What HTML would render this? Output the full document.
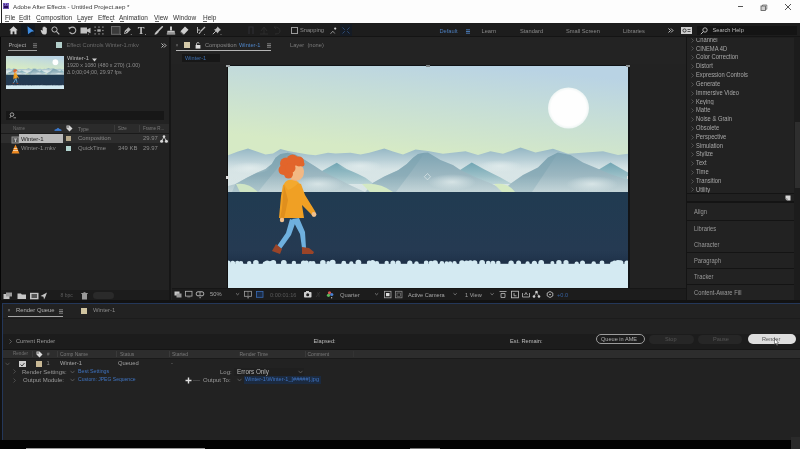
<!DOCTYPE html>
<html><head><meta charset="utf-8">
<style>
*{margin:0;padding:0;box-sizing:border-box}
html,body{width:800px;height:449px;overflow:hidden;background:#121212}
body{will-change:transform;position:relative;font-family:"Liberation Sans",sans-serif;color:#9a9a9a;font-size:5.7px;line-height:1}
.a{position:absolute}
.t{position:absolute;white-space:nowrap;line-height:1}
.ic{position:absolute;overflow:visible}
</style></head><body>
<!-- ===== TITLE BAR ===== -->
<div class="a" style="left:0;top:0;width:800px;height:23px;background:#fdfdfd"></div>
<div class="a" style="left:1px;top:0;width:1px;height:23px;background:#222"></div>
<div class="a" style="left:3px;top:3px;width:6.4px;height:6.2px;background:#2a0f58;border:0.4px solid #6d55b0"></div>
<div class="t" style="left:4.2px;top:4.4px;font-size:3.4px;color:#9f84f0;font-weight:bold">Ae</div>
<div class="t" style="left:13px;top:3.6px;font-size:6.2px;color:#3a3a3a">Adobe After Effects - Untitled Project.aep *</div>
<div class="a" style="left:737.5px;top:6px;width:5px;height:0.8px;background:#555"></div>
<svg class="ic" style="left:760px;top:3.5px" width="8" height="7" viewBox="0 0 8 7"><rect x="1" y="2" width="4.5" height="4.5" fill="#cfcfcf" stroke="#555" stroke-width="0.8"/><path d="M2.5 2V1H6.8V5.2H5.5" fill="none" stroke="#555" stroke-width="0.7"/></svg>
<svg class="a" style="left:784px;top:3px" width="8" height="8" viewBox="0 0 8 8"><path d="M1 1L7 7M7 1L1 7" stroke="#555" stroke-width="1"/></svg>
<!-- menu -->
<div class="t" style="left:5px;top:15px;font-size:6.5px;color:#333;word-spacing:0">File</div>
<div class="t" style="left:19px;top:15px;font-size:6.5px;color:#333">Edit</div>
<div class="t" style="left:36px;top:15px;font-size:6.5px;color:#333">Composition</div>
<div class="t" style="left:77px;top:15px;font-size:6.5px;color:#333">Layer</div>
<div class="t" style="left:98px;top:15px;font-size:6.5px;color:#333">Effect</div>
<div class="t" style="left:119px;top:15px;font-size:6.5px;color:#333">Animation</div>
<div class="t" style="left:154px;top:15px;font-size:6.5px;color:#333">View</div>
<div class="t" style="left:173px;top:15px;font-size:6.5px;color:#333">Window</div>
<div class="t" style="left:203px;top:15px;font-size:6.5px;color:#333">Help</div>
<div class="a" style="left:5px;top:20.6px;width:3.5px;height:0.7px;background:#666"></div>
<div class="a" style="left:19px;top:20.6px;width:3.5px;height:0.7px;background:#666"></div>
<div class="a" style="left:36.5px;top:20.6px;width:4px;height:0.7px;background:#666"></div>
<div class="a" style="left:77.5px;top:20.6px;width:3.5px;height:0.7px;background:#666"></div>
<div class="a" style="left:111px;top:20.6px;width:2px;height:0.7px;background:#666"></div>
<div class="a" style="left:120px;top:20.6px;width:4px;height:0.7px;background:#666"></div>
<div class="a" style="left:155px;top:20.6px;width:3.5px;height:0.7px;background:#666"></div>
<div class="a" style="left:203px;top:20.6px;width:4px;height:0.7px;background:#666"></div>
<!-- ===== TOOLBAR ===== -->
<div class="a" style="left:0;top:23px;width:800px;height:14px;background:#1d1d1d"></div>
<div class="a" style="left:0;top:36px;width:800px;height:1px;background:#141414"></div>
<!-- home -->
<svg class="ic" style="left:8.7px;top:25.8px" width="9" height="8.5" viewBox="0 0 9 8.5"><path d="M4.5 0.3L0.2 4.2H1.5V8.2H3.6V5.6H5.4V8.2H7.5V4.2H8.8Z" fill="#d2d2d2"/></svg>
<!-- selection (blue) -->
<div class="a" style="left:21px;top:23.5px;width:14px;height:12.5px;background:#131920"></div>
<svg class="ic" style="left:26.5px;top:25.8px" width="8" height="9" viewBox="0 0 8 9"><path d="M0.5 0.3L7.2 5.2L4.5 5.8L1 8.3Z" fill="#3d8be0"/></svg>
<!-- hand -->
<svg class="ic" style="left:39.5px;top:25.5px" width="9" height="9" viewBox="0 0 9 9"><path d="M0.6 4.3Q1.2 3.6 2 4.2L2.6 5V1.6Q3 1 3.5 1.6V4.3V0.8Q4 0.2 4.6 0.8V4.2V1.1Q5.1 0.5 5.7 1.1V4.3V2Q6.2 1.4 6.8 2V6Q6.8 8.6 4.3 8.6Q2.5 8.6 1.7 7Z" fill="#cdcdcd"/></svg>
<!-- zoom -->
<svg class="ic" style="left:51px;top:26px" width="9" height="9" viewBox="0 0 9 9"><circle cx="3.5" cy="3.5" r="2.6" fill="none" stroke="#bdbdbd" stroke-width="1"/><path d="M5.4 5.4L8.3 8.3" stroke="#bdbdbd" stroke-width="1.1"/></svg>
<!-- rotate -->
<svg class="ic" style="left:68px;top:26px" width="9" height="9" viewBox="0 0 9 9"><path d="M2 2.2A3.3 3.3 0 1 1 1.6 6" fill="none" stroke="#b5b5b5" stroke-width="1.1"/><path d="M0.3 1.2L3.2 1.2L1.2 3.8Z" fill="#b5b5b5"/></svg>
<!-- camera -->
<svg class="ic" style="left:80px;top:26px" width="11" height="9" viewBox="0 0 11 9"><rect x="0.5" y="1.5" width="6.5" height="6" fill="#c2c2c2"/><path d="M7 3.5L10.5 1.8V7.2L7 5.5Z" fill="#c2c2c2"/><rect x="8" y="7.6" width="1" height="1" fill="#888"/></svg>
<!-- pan behind -->
<svg class="ic" style="left:94px;top:26px" width="10" height="9" viewBox="0 0 10 9"><g fill="#aaa"><rect x="0.5" y="0.5" width="1.2" height="1.2"/><rect x="4.4" y="0.5" width="1.2" height="1.2"/><rect x="8.3" y="0.5" width="1.2" height="1.2"/><rect x="0.5" y="3.9" width="1.2" height="1.2"/><rect x="8.3" y="3.9" width="1.2" height="1.2"/><rect x="0.5" y="7.3" width="1.2" height="1.2"/><rect x="4.4" y="7.3" width="1.2" height="1.2"/><rect x="8.3" y="7.3" width="1.2" height="1.2"/><rect x="3.3" y="3.3" width="3.4" height="2.4"/></g></svg>
<!-- rectangle -->
<svg class="ic" style="left:111px;top:26px" width="10" height="9" viewBox="0 0 10 9"><rect x="0.5" y="0.5" width="8.5" height="7.8" fill="#3a3a3a" stroke="#6a6a6a" stroke-width="1"/><rect x="9" y="8" width="1" height="1" fill="#777"/></svg>
<!-- pen -->
<svg class="ic" style="left:123px;top:26px" width="9" height="9" viewBox="0 0 9 9"><path d="M1 8L1.8 4.8L5.5 1.2L7.8 3.5L4.2 7.2Z" fill="#b8b8b8"/><path d="M2 7L4 5" stroke="#1d1d1d" stroke-width="0.7"/><rect x="7.8" y="8" width="1" height="1" fill="#888"/></svg>
<!-- T -->
<div class="t" style="left:137.8px;top:25.6px;font-family:'Liberation Serif',serif;font-weight:bold;font-size:10px;color:#c4c4c4">T</div>
<div class="a" style="left:145px;top:34px;width:1px;height:1px;background:#888"></div>
<!-- brush -->
<svg class="ic" style="left:154px;top:25.5px" width="9" height="9" viewBox="0 0 9 9"><path d="M8.3 0.8L4.5 4.6" stroke="#c4c4c4" stroke-width="1.6" stroke-linecap="round"/><path d="M3.6 4.3L5 5.7L2.6 8.2Q1 8.9 0.5 8.5Q0.5 7.2 3.6 4.3Z" fill="#c4c4c4"/></svg>
<!-- stamp -->
<svg class="ic" style="left:166px;top:26px" width="10" height="9" viewBox="0 0 10 9"><rect x="4" y="0.5" width="2" height="4" fill="#c6c6c6"/><path d="M1.5 4.8H8.5L9 6.8H1Z" fill="#c6c6c6"/><rect x="0.8" y="7.3" width="8.4" height="1.2" fill="#c6c6c6"/></svg>
<!-- eraser -->
<svg class="ic" style="left:180px;top:26px" width="9" height="9" viewBox="0 0 9 9"><path d="M5 0.5L8.5 3.8L4 8.5L0.5 5.2Z" fill="#cfcfcf"/><path d="M0.5 5.2L4 8.5L3 8.8L0.6 6.4Z" fill="#777"/></svg>
<!-- roto brush -->
<svg class="ic" style="left:196px;top:26px" width="10" height="9" viewBox="0 0 10 9"><path d="M1.5 1V7M1.5 4H4" stroke="#b0b0b0" stroke-width="1"/><path d="M9 1L4.5 5.5" stroke="#b8b8b8" stroke-width="1.2"/><path d="M4.3 5.3L5 6L3.5 8Q2.5 8.3 2.5 7.6Z" fill="#b8b8b8"/><rect x="8" y="8" width="1" height="1" fill="#777"/></svg>
<!-- puppet pin -->
<svg class="ic" style="left:212px;top:26px" width="10" height="9" viewBox="0 0 10 9"><path d="M5.5 0.5L9 4L7.8 4.6L6.2 6.2L6 7.5L2 3.5L3.4 3.2L5 1.7Z" fill="#bcbcbc"/><path d="M3.8 5.2L0.8 8.2" stroke="#bcbcbc" stroke-width="1"/><rect x="8.5" y="8" width="1" height="1" fill="#777"/></svg>
<!-- faded icons -->
<svg class="ic" style="left:247px;top:26px" width="36" height="9" viewBox="0 0 36 9"><path d="M2 8V1H6V8" fill="none" stroke="#2e2e33" stroke-width="1.2"/><path d="M13 8H21M17 1V8M14 5L17 1L20 5" fill="none" stroke="#2d2d2d" stroke-width="1"/><path d="M27 1Q33 1 33 5Q33 8 28 8M27 1L29 3" fill="none" stroke="#2d2d2d" stroke-width="1"/></svg>
<!-- snapping -->
<div class="a" style="left:291px;top:27px;width:6.5px;height:6.5px;border:1px solid #9a9a9a"></div>
<div class="t" style="left:300px;top:28.2px;color:#8e8e8e">Snapping</div>
<svg class="ic" style="left:329px;top:26px" width="9" height="9" viewBox="0 0 9 9"><path d="M1.5 7.8L3.8 5.2L5.8 7.5" fill="none" stroke="#999" stroke-width="0.9"/><circle cx="6.2" cy="2.6" r="1.1" fill="#d5d5d5"/></svg>
<div class="a" style="left:340px;top:24px;width:12px;height:12px;background:#151b24"></div><svg class="ic" style="left:341px;top:26px" width="10" height="9" viewBox="0 0 10 9"><path d="M1.5 1.5L3.8 3.8M8.5 1.5L6.2 3.8M1.5 7.5L3.8 5.2M8.5 7.5L6.2 5.2" fill="none" stroke="#2d4a75" stroke-width="1"/></svg>
<!-- workspaces -->
<div class="t" style="left:439.5px;top:28.6px;color:#4d7fbe">Default</div>
<svg class="ic" style="left:466px;top:28.5px" width="4" height="5" viewBox="0 0 4 5"><path d="M0 0.8H4M0 2.5H4M0 4.2H4" stroke="#4d7fbe" stroke-width="0.9"/></svg>
<div class="t" style="left:481.5px;top:28.6px;color:#8a8a8a">Learn</div>
<div class="t" style="left:520px;top:28.6px;color:#8a8a8a">Standard</div>
<div class="t" style="left:566px;top:28.6px;color:#8a8a8a">Small Screen</div>
<div class="t" style="left:623px;top:28.6px;color:#8a8a8a">Libraries</div>
<svg class="ic" style="left:668px;top:27.5px" width="6" height="5" viewBox="0 0 6 5"><path d="M0.5 0.5L2.5 2.5L0.5 4.5M3 0.5L5 2.5L3 4.5" fill="none" stroke="#cfcfcf" stroke-width="0.9"/></svg>
<div class="a" style="left:681px;top:26.5px;width:10.5px;height:7px;background:#cfcfcf"></div>
<svg class="ic" style="left:681px;top:26.5px" width="11" height="7" viewBox="0 0 11 7"><circle cx="3.5" cy="3.5" r="1.6" fill="none" stroke="#1d1d1d" stroke-width="0.8"/><path d="M6.5 2.5H9.5M6.5 4.5H9.5" stroke="#1d1d1d" stroke-width="0.7"/></svg>
<div class="a" style="left:697px;top:25.5px;width:100px;height:9px;background:#141414"></div>
<svg class="ic" style="left:700px;top:26.5px" width="8" height="8" viewBox="0 0 8 8"><circle cx="5" cy="3" r="2.2" fill="none" stroke="#bdbdbd" stroke-width="0.9"/><path d="M3.4 4.6L0.8 7.2" stroke="#bdbdbd" stroke-width="1"/></svg>
<div class="t" style="left:712.5px;top:28.3px;color:#b8b8b8">Search Help</div>
<!-- ===== PANEL AREA BG ===== -->
<div class="a" style="left:0;top:37px;width:800px;height:266px;background:#161616"></div>
<!-- ===== PROJECT PANEL ===== -->
<div class="a" style="left:1px;top:37px;width:168px;height:263px;background:#222"></div>
<div class="a" style="left:0;top:37px;width:1px;height:266px;background:#050505"></div>
<div class="t" style="left:8.5px;top:42.5px;color:#a8a8a8">Project</div>
<svg class="ic" style="left:33px;top:43px" width="4" height="5" viewBox="0 0 4 5"><path d="M0 0.8H4M0 2.5H4M0 4.2H4" stroke="#7a7a7a" stroke-width="0.9"/></svg>
<div class="a" style="left:8px;top:50px;width:29px;height:1px;background:#9d9d9d"></div>
<div class="a" style="left:56px;top:42px;width:5.5px;height:6px;background:#b3cfcb"></div>
<div class="t" style="left:66.5px;top:42.5px;color:#6b6b6b">Effect Controls Winter-1.mkv</div>
<svg class="ic" style="left:161px;top:43px" width="6" height="5" viewBox="0 0 6 5"><path d="M0.5 0.5L2.5 2.5L0.5 4.5M3 0.5L5 2.5L3 4.5" fill="none" stroke="#cfcfcf" stroke-width="0.9"/></svg>
<!-- thumbnail -->
<svg class="a" style="left:6px;top:56px" width="58" height="33" viewBox="228 66 400 222" preserveAspectRatio="none"><use href="#scene"/></svg>
<div class="t" style="left:67px;top:56px;color:#bdbdbd;font-size:5.8px">Winter-1</div>
<svg class="ic" style="left:92px;top:57.5px" width="5" height="4" viewBox="0 0 5 4"><path d="M0 0.5H5L2.5 3.5Z" fill="#d0d0d0"/></svg>
<div class="t" style="left:67px;top:63px;color:#8e8e8e;font-size:5.32px">1920 x 1080  (480 x 270) (1.00)</div>
<div class="t" style="left:67px;top:70.1px;color:#8e8e8e;font-size:5.32px">&#916; 0;00;04;00, 29.97 fps</div>
<!-- search field -->
<div class="a" style="left:6px;top:111px;width:158px;height:8.5px;background:#171717"></div>
<svg class="ic" style="left:9px;top:112px" width="9" height="7" viewBox="0 0 9 7"><circle cx="3" cy="2.6" r="1.8" fill="none" stroke="#bbb" stroke-width="0.8"/><path d="M1.8 4.2L0.8 6M4.5 5.8H7" stroke="#bbb" stroke-width="0.8"/></svg>
<!-- header -->
<div class="a" style="left:1px;top:124px;width:168px;height:9px;background:#2b2b2b"></div>
<div class="a" style="left:1px;top:133px;width:168px;height:0.6px;background:#1a1a1a"></div>
<div class="t" style="left:13px;top:127.3px;color:#6e6e6e;font-size:4.5px">Name</div>
<svg class="ic" style="left:54px;top:126.5px" width="8" height="4" viewBox="0 0 8 4"><path d="M0.5 3.5L4 0.8L7.5 3.5Z" fill="#3d7bd0"/><rect x="0.5" y="2.5" width="7" height="1.3" rx="0.6" fill="#3d7bd0"/></svg>
<svg class="ic" style="left:65.5px;top:124.5px" width="7" height="7" viewBox="0 0 7 7"><path d="M0.5 0.5H3.5L6.5 3.5L3.5 6.5L0.5 3.5Z" fill="#d6d6d6"/><circle cx="2" cy="2" r="0.7" fill="#2b2b2b"/></svg>
<div class="t" style="left:78px;top:127.3px;color:#7e7e7e;font-size:5px">Type</div>
<div class="a" style="left:114px;top:125px;width:0.7px;height:7px;background:#3a3a3a"></div>
<div class="t" style="left:118px;top:127.3px;color:#7a7a7a;font-size:4.5px">Size</div>
<div class="a" style="left:138.5px;top:125px;width:0.7px;height:7px;background:#3a3a3a"></div>
<div class="t" style="left:143px;top:127.3px;color:#7a7a7a;font-size:4.5px">Frame R...</div>
<!-- row 1 selected -->
<div class="a" style="left:1px;top:133.5px;width:168px;height:9.5px;background:#2e2e2e"></div>
<svg class="ic" style="left:10.5px;top:135.5px" width="9" height="8" viewBox="0 0 9 8"><rect x="0.5" y="0.5" width="8" height="7" fill="#8f8f8f"/><rect x="1.5" y="1.5" width="6" height="5" fill="#595959"/><path d="M3 2.5H6V3.5H5V6H4V3.5H3Z" fill="#bdbdbd"/></svg>
<div class="a" style="left:19px;top:133.5px;width:43.5px;height:9.5px;background:#b9b9b9"></div>
<div class="t" style="left:21px;top:135.5px;color:#222;font-size:6px">Winter-1</div>
<div class="a" style="left:66px;top:136px;width:5px;height:5px;background:#b6a98c"></div>
<div class="t" style="left:78px;top:135.5px;color:#8a8a8a;font-size:5.9px">Composition</div>
<div class="t" style="left:143px;top:135.5px;color:#8a8a8a;font-size:5.9px">29.97</div>
<svg class="ic" style="left:160px;top:134.5px" width="8" height="8" viewBox="0 0 8 8"><circle cx="4" cy="1.6" r="1.3" fill="#d8d8d8"/><circle cx="1.6" cy="6.2" r="1.5" fill="#d8d8d8"/><circle cx="6.4" cy="6.2" r="1.5" fill="#d8d8d8"/><path d="M4 2L1.6 6M4 2L6.4 6" stroke="#d8d8d8" stroke-width="0.8"/></svg>
<!-- row 2 -->
<svg class="ic" style="left:10.5px;top:144px" width="9" height="10" viewBox="0 0 9 10"><path d="M4.5 0.5L8.5 9.5H0.5Z" fill="#ef8a22"/><path d="M2.7 4.5H6.3M2 6.5H7" stroke="#f4d6b0" stroke-width="0.9"/></svg>
<div class="t" style="left:21px;top:146px;color:#8a8a8a;font-size:5.9px">Winter-1.mkv</div>
<div class="a" style="left:66px;top:146px;width:5px;height:5px;background:#b3d4cf"></div>
<div class="t" style="left:78px;top:146px;color:#8a8a8a;font-size:5.9px">QuickTime</div>
<div class="t" style="left:118px;top:146px;color:#8a8a8a;font-size:5.9px">349 KB</div>
<div class="t" style="left:143px;top:146px;color:#8a8a8a;font-size:5.9px">29.97</div>
<!-- project footer -->
<div class="a" style="left:1px;top:290px;width:168px;height:10px;background:#1c1c1c"></div>
<svg class="ic" style="left:3px;top:292px" width="80" height="8" viewBox="0 0 80 8"><g fill="#c4c4c4"><rect x="0.5" y="2" width="6" height="5"/><rect x="3" y="0.5" width="6" height="4" fill="#9a9a9a"/><path d="M14.5 1.5H18L18.8 2.5H23V7H14.5Z"/><rect x="27" y="0.8" width="8.5" height="6.5"/><path d="M44 0.5L37.5 4L40.5 4.8L41 7.5L42.2 5.2Z"/></g><rect x="28.5" y="2" width="5.5" height="4" fill="#555"/></svg>
<div class="t" style="left:60.5px;top:293px;color:#5d5d5d;font-size:5px">8 bpc</div>
<svg class="ic" style="left:81px;top:291.5px" width="7" height="8" viewBox="0 0 7 8"><rect x="1" y="2" width="5" height="5.5" fill="#9a9a9a"/><rect x="0.3" y="1" width="6.4" height="1" fill="#9a9a9a"/><rect x="2.5" y="0.2" width="2" height="1" fill="#9a9a9a"/></svg>
<div class="a" style="left:93px;top:291.5px;width:21px;height:7px;border-radius:3.5px;background:#2a2a2a"></div>
<!-- ===== COMPOSITION PANEL ===== -->
<div class="a" style="left:171px;top:37px;width:515px;height:263px;background:#232323"></div>
<div class="t" style="left:175.5px;top:42.5px;color:#777;font-size:5px">&#215;</div>
<div class="a" style="left:184px;top:42px;width:5.5px;height:5.5px;background:#d4c9a8"></div>
<svg class="ic" style="left:194.5px;top:41.5px" width="6" height="7" viewBox="0 0 6 7"><path d="M1.5 3V1.8Q1.5 0.6 3 0.6Q4.2 0.6 4.2 1.6" fill="none" stroke="#ddd" stroke-width="0.8"/><rect x="0.6" y="3" width="4.8" height="3.6" fill="#ddd"/></svg>
<div class="t" style="left:205px;top:42.5px;color:#8a8a8a">Composition</div>
<div class="t" style="left:239px;top:42.5px;color:#4f86c9">Winter-1</div>
<svg class="ic" style="left:266.5px;top:43px" width="4" height="5" viewBox="0 0 4 5"><path d="M0 0.8H4M0 2.5H4M0 4.2H4" stroke="#8a8a8a" stroke-width="0.9"/></svg>
<div class="a" style="left:176px;top:50px;width:95px;height:1px;background:#b5b5b5"></div>
<div class="t" style="left:290px;top:42.5px;color:#7a7a7a">Layer&#160;&#160;(none)</div>
<div class="a" style="left:182px;top:54px;width:37.5px;height:7.5px;background:#171717"></div>
<div class="t" style="left:185px;top:55.5px;color:#3f70b0;font-size:5.6px">Winter-1</div>
<!-- viewer -->
<div class="a" style="left:171px;top:64px;width:515px;height:225px;background:#222"></div><div class="a" style="left:227px;top:65px;width:402px;height:1px;background:#101316"></div><div class="a" style="left:227px;top:65px;width:1px;height:224px;background:#111"></div>
<svg class="a" style="left:228px;top:66px" width="400" height="222" viewBox="228 66 400 222">
<defs>
<linearGradient id="sky" gradientUnits="userSpaceOnUse" x1="440" y1="60" x2="430" y2="155"><stop offset="0" stop-color="#b9d3e4"/><stop offset="0.4" stop-color="#c5ddd8"/><stop offset="1" stop-color="#d6eac5"/></linearGradient>
<radialGradient id="sun"><stop offset="0.86" stop-color="#fefefe"/><stop offset="1" stop-color="#eef5f4"/></radialGradient>
<linearGradient id="mA" gradientUnits="userSpaceOnUse" x1="0" y1="148" x2="0" y2="170"><stop offset="0" stop-color="#95b7c4"/><stop offset="1" stop-color="#d5e3e5"/></linearGradient><linearGradient id="fogA" x1="0" y1="0" x2="0" y2="1"><stop offset="0" stop-color="#dbe7e7" stop-opacity="0"/><stop offset="0.5" stop-color="#dbe7e7" stop-opacity="0.5"/><stop offset="1" stop-color="#dbe7e7" stop-opacity="0.3"/></linearGradient><linearGradient id="fog" x1="0" y1="0" x2="0" y2="1"><stop offset="0" stop-color="#dfeaea" stop-opacity="0"/><stop offset="1" stop-color="#dfeaea" stop-opacity="0.3"/></linearGradient>
<linearGradient id="mB" gradientUnits="userSpaceOnUse" x1="0" y1="162" x2="0" y2="184"><stop offset="0" stop-color="#6fa4b2"/><stop offset="1" stop-color="#b4cfd3"/></linearGradient>
<linearGradient id="mC" gradientUnits="userSpaceOnUse" x1="0" y1="152" x2="0" y2="192"><stop offset="0" stop-color="#7ca3b2"/><stop offset="0.55" stop-color="#9ab6c0"/><stop offset="1" stop-color="#b6cbd0"/></linearGradient>
<linearGradient id="gnd" x1="0" y1="0" x2="0" y2="1"><stop offset="0" stop-color="#203b51"/><stop offset="0.6" stop-color="#253a52"/><stop offset="1" stop-color="#26364e"/></linearGradient>
<linearGradient id="gnd2" x1="0" y1="0" x2="0" y2="1"><stop offset="0" stop-color="#21374f" stop-opacity="0"/><stop offset="1" stop-color="#1b2d43"/></linearGradient>
<radialGradient id="wf"><stop offset="0" stop-color="#e4eeee" stop-opacity="0.75"/><stop offset="1" stop-color="#e4eeee" stop-opacity="0"/></radialGradient>
</defs>
<g id="scene" style="filter:blur(0.35px)"><rect x="228" y="66" width="400" height="222" fill="url(#sky)"/>
<circle cx="568.5" cy="108" r="20.5" fill="url(#sun)"/>
<path d="M228 155.25 L238 151.5 L248 148.4 L256.75 151.5 L265.5 154.6 L273 153.4 L280.5 149 L288 150.9 L298 152.75 L308 154.6 L315.5 155.25 L328 152.75 L335.5 153.4 L350.5 152.75 L360.5 154.6 L369.25 152.75 L384.25 148.4 L393 151.5 L403 154.6 L415.5 149.6 L428 150.9 L443 153.75 L465.5 151.25 L478 155 L490.5 151.25 L503 153.75 L520.5 147.5 L535.5 152.5 L553 148.75 L568 153.75 L603 151.25 L618 155 L628 153.75 L628 192 L228 192Z" fill="url(#mA)"/>
<rect x="228" y="160" width="400" height="32" fill="url(#fogA)"/>
<path d="M312 184 L322 171 L336.75 162.75 L346.75 169 L358 174 L365.5 177.75 L374 184Z" fill="url(#mB)"/>
<path d="M450 184 L460 170 L471.75 162.5 L485.5 170 L500.5 177.5 L512 184Z" fill="url(#mB)"/>
<path d="M590 184 L598 170 L610.5 162.5 L628 172.5 L628 184Z" fill="url(#mB)"/>
<path d="M228 186 L235.5 184 L246.75 177.75 L256.75 172.75 L265.5 169 L271.75 164 L275.5 157.75 L280.5 154 L288 152.75 L295.5 154.6 L305.5 160.25 L315.5 166.5 L323 171.5 L328 174 L340 180 L352 186 L365 192 L228 192Z" fill="url(#mC)"/>
<path d="M365 192 L373 182.75 L384.25 176.5 L398 170.25 L406.75 164 L413 157.75 L418 154 L424.25 152.75 L428 152.5 L440.5 160 L453 165 L460.5 170 L475 177 L490 183 L505 190 L510 192Z" fill="url(#mC)"/>
<path d="M500 192 L510.5 183.75 L523 175 L538 167.5 L548 157.5 L558 152.5 L570.5 155 L583 162.5 L598 168.75 L610 174 L628 180 L628 192Z" fill="url(#mC)"/>
<path d="M235.5 184 L246.75 177.75 L256.75 172.75 L265.5 169 L271.75 164 L275.5 157.75 L280.5 154 L288 152.75 L283 160 L276 170 L266 182 L258 192 L232 192Z" fill="#7aa2b0" opacity="0.45"/>
<path d="M373 182.75 L384.25 176.5 L398 170.25 L406.75 164 L413 157.75 L418 154 L424.25 152.75 L419 161 L411 172 L402 184 L396 192 L366 192Z" fill="#7aa2b0" opacity="0.45"/>
<path d="M510.5 183.75 L523 175 L538 167.5 L548 157.5 L558 152.5 L552 162 L544 174 L536 186 L532 192 L503 192Z" fill="#7aa2b0" opacity="0.45"/>
<rect x="228" y="176" width="400" height="16" fill="url(#fog)"/>
<ellipse cx="318" cy="184" rx="26" ry="8" fill="url(#wf)"/>
<ellipse cx="452" cy="182" rx="24" ry="8" fill="url(#wf)"/>
<ellipse cx="592" cy="184" rx="26" ry="8" fill="url(#wf)"/>
<ellipse cx="360" cy="166" rx="22" ry="6" fill="url(#wf)"/>
<ellipse cx="500" cy="166" rx="22" ry="6" fill="url(#wf)"/>
<ellipse cx="250" cy="168" rx="20" ry="6" fill="url(#wf)"/>

<path d="M236 184Q248 182 258 192H240Z" fill="#cfe5c4"/>
<path d="M362 184Q380 182 393 192H370Z" fill="#d4e9c3"/>
<path d="M494 184Q508 182 515 192H502Z" fill="#d5eac3"/>
<rect x="228" y="192" width="400" height="96" fill="url(#gnd)"/>
<rect x="228" y="250" width="400" height="15" fill="url(#gnd2)"/>
<rect x="228" y="263.8" width="400" height="24.2" fill="#d4eaf2"/><g fill="#d4eaf2"><circle cx="228.0" cy="263.2" r="2.7"/><circle cx="232.7" cy="263.3" r="2.5"/><circle cx="237.3" cy="262.9" r="2.2"/><circle cx="240.9" cy="263.4" r="2.4"/><circle cx="249.2" cy="263.1" r="2.2"/><circle cx="255.9" cy="262.8" r="2.8"/><circle cx="264.8" cy="263.5" r="2.1"/><circle cx="267.2" cy="263.2" r="2.8"/><circle cx="270.3" cy="263.1" r="2.2"/><circle cx="273.3" cy="263.0" r="2.9"/><circle cx="283.8" cy="262.8" r="2.9"/><circle cx="293.9" cy="263.0" r="2.2"/><circle cx="303.5" cy="263.2" r="2.6"/><circle cx="306.3" cy="263.0" r="2.4"/><circle cx="310.4" cy="263.2" r="2.2"/><circle cx="313.2" cy="263.4" r="2.3"/><circle cx="322.9" cy="262.9" r="2.8"/><circle cx="328.3" cy="263.0" r="2.0"/><circle cx="332.6" cy="262.7" r="3.0"/><circle cx="343.8" cy="263.2" r="2.4"/><circle cx="351.3" cy="263.4" r="2.1"/><circle cx="358.4" cy="262.6" r="2.9"/><circle cx="369.2" cy="262.9" r="2.4"/><circle cx="372.6" cy="262.7" r="2.7"/><circle cx="376.8" cy="263.3" r="2.3"/><circle cx="386.7" cy="263.0" r="2.2"/><circle cx="392.9" cy="263.0" r="2.5"/><circle cx="398.2" cy="263.2" r="2.6"/><circle cx="409.8" cy="263.2" r="2.6"/><circle cx="416.5" cy="263.5" r="2.2"/><circle cx="426.2" cy="262.9" r="2.4"/><circle cx="431.0" cy="263.1" r="2.3"/><circle cx="435.0" cy="263.2" r="2.9"/><circle cx="441.9" cy="263.2" r="2.3"/><circle cx="446.6" cy="263.4" r="2.1"/><circle cx="450.1" cy="263.5" r="2.2"/><circle cx="454.5" cy="263.2" r="2.2"/><circle cx="462.0" cy="263.1" r="2.8"/><circle cx="466.5" cy="263.2" r="2.7"/><circle cx="470.3" cy="262.9" r="2.7"/><circle cx="474.6" cy="263.1" r="2.8"/><circle cx="482.1" cy="262.9" r="2.9"/><circle cx="488.2" cy="263.0" r="2.3"/><circle cx="492.9" cy="263.2" r="2.5"/><circle cx="498.3" cy="263.1" r="2.3"/><circle cx="511.1" cy="263.3" r="2.7"/><circle cx="518.6" cy="263.1" r="2.5"/><circle cx="527.6" cy="263.4" r="2.1"/><circle cx="534.4" cy="263.3" r="2.6"/><circle cx="541.2" cy="262.8" r="2.9"/><circle cx="552.4" cy="263.1" r="2.0"/><circle cx="558.9" cy="262.8" r="2.7"/><circle cx="566.0" cy="262.7" r="2.6"/><circle cx="576.7" cy="263.5" r="2.1"/><circle cx="582.5" cy="263.0" r="2.5"/><circle cx="593.7" cy="263.4" r="2.2"/><circle cx="602.0" cy="263.0" r="2.4"/><circle cx="612.0" cy="263.4" r="2.0"/><circle cx="614.5" cy="263.0" r="2.5"/><circle cx="618.0" cy="263.1" r="3.0"/><circle cx="620.6" cy="263.0" r="2.8"/><circle cx="626.9" cy="262.9" r="2.5"/><circle cx="629.6" cy="263.5" r="2.1"/><circle cx="633.1" cy="263.0" r="2.4"/><circle cx="636.3" cy="263.0" r="2.5"/></g>
<g>
<path d="M290 219L286 233L277 246L281 249L291 235L296 221Z" fill="#6fb0de"/>
<path d="M292 219L300 234L302 248L306 248L305 232L299 218Z" fill="#6fb0de"/>
<path d="M276 244L282 249L280 254L272 251Z" fill="#9a4428"/>
<path d="M302 247L309 248L314 252L313 254L302 254Z" fill="#9a4428"/>
<path d="M290 180L283 185L281 196L279 218L304 218L302 205L312 215L315.5 212L305 195L301 184Z" fill="#f0a024"/>
<path d="M284 185L282 208L280 219L284 219L288 200Z" fill="#e08f1d"/>
<circle cx="282" cy="220" r="2.2" fill="#f2c08c"/>
<circle cx="314" cy="214.5" r="2.4" fill="#f2c08c"/>
<rect x="291" y="176" width="6" height="8" fill="#eeb07a"/>
<path d="M292 164Q303 162 304 171Q304 179 298 180.5L291 179Z" fill="#f2b884"/>
<g fill="#e2652b"><circle cx="286" cy="163.5" r="6"/><circle cx="292.5" cy="160.5" r="6"/><circle cx="299" cy="161.5" r="5"/><circle cx="283.5" cy="170" r="5"/><circle cx="288.5" cy="174" r="4.5"/><circle cx="290.5" cy="168" r="5"/><circle cx="302" cy="164" r="2.5"/></g>
<path d="M284 184Q287 179 292 180L299 182Q294 188 288 190Z" fill="#f3a92e"/>
</g>
</g>
<path d="M427.5 173.5L430.5 176.7L427.5 179.9L424.3 176.7Z" fill="none" stroke="#e8eeee" stroke-width="0.6"/>
</svg>
<!-- transform handles -->
<div class="a" style="left:226px;top:175.5px;width:3px;height:3px;background:#e0e0e0"></div>
<div class="a" style="left:626.5px;top:175.5px;width:3px;height:3px;background:#e0e0e0"></div>
<div class="a" style="left:425.5px;top:64.8px;width:4px;height:2px;background:#7d8588"></div>
<div class="a" style="left:628px;top:65px;width:1.5px;height:224px;background:#121416"></div>
<div class="a" style="left:225.5px;top:64.8px;width:4px;height:2px;background:#9aa0a2"></div><div class="a" style="left:626px;top:64.8px;width:4px;height:2px;background:#8a9092"></div>
<!-- viewer bottom line -->
<div class="a" style="left:172px;top:288px;width:514px;height:1px;background:#161616"></div>
<!-- comp footer -->
<div class="a" style="left:172px;top:289px;width:514px;height:11px;background:#1c1c1c"></div>
<svg class="ic" style="left:172px;top:289px" width="400" height="11" viewBox="172 289 400 11">
<g fill="#c8c8c8">
<rect x="174.5" y="291.5" width="5" height="4"/><rect x="176.5" y="293.5" width="5" height="4" fill="#9a9a9a"/>
<rect x="185.5" y="291.3" width="6.5" height="4.8" fill="none" stroke="#b5b5b5" stroke-width="0.8"/><rect x="187.3" y="296.6" width="3" height="0.7" fill="#999"/>
<rect x="196.3" y="291.8" width="7.4" height="4" rx="1.6" fill="none" stroke="#c8c8c8" stroke-width="0.9"/><path d="M200 292V295.5" stroke="#c8c8c8" stroke-width="0.7"/><rect x="199.5" y="297.2" width="1.2" height="1"/>
</g>
<path d="M236 293.3L237.6 294.8L239.2 293.3" fill="none" stroke="#999" stroke-width="0.7"/>
<rect x="244.5" y="291.3" width="7" height="5" fill="none" stroke="#a0a0a0" stroke-width="0.8"/><path d="M248 291.3V296.3" stroke="#a0a0a0" stroke-width="0.5"/><rect x="247.5" y="297.3" width="1.2" height="1" fill="#ccc"/>
<rect x="256.5" y="291.5" width="6.5" height="5.8" fill="#1a2b45" stroke="#3a6cb5" stroke-width="0.8"/>
<rect x="304" y="292" width="7.5" height="5.5" rx="0.8" fill="#cfcfcf"/><rect x="306" y="291" width="3" height="1.2" fill="#cfcfcf"/><circle cx="307.7" cy="294.7" r="1.5" fill="#1c1c1c"/>
<path d="M316 297L320 292M317 292.5Q320 294 319 297" fill="none" stroke="#3a3a3a" stroke-width="0.8"/>
<circle cx="329.5" cy="292.8" r="1.6" fill="#d9534f"/><circle cx="331.8" cy="294.5" r="1.6" fill="#4a7fd1"/><circle cx="328.5" cy="295.3" r="1.6" fill="#5cb85c"/><rect x="331" y="297.3" width="1.2" height="1" fill="#ddd"/>
<path d="M375 293.3L376.6 294.8L378.2 293.3" fill="none" stroke="#999" stroke-width="0.7"/>
<rect x="384.5" y="291.3" width="6.5" height="6.5" fill="none" stroke="#a9a9a9" stroke-width="0.8"/><rect x="386" y="293" width="3.5" height="3.2" fill="#ddd"/>
<rect x="395.5" y="291.3" width="6.5" height="6.5" fill="none" stroke="#888" stroke-width="0.8"/><rect x="397" y="293" width="3.5" height="3.2" fill="none" stroke="#888" stroke-width="0.6"/>
<path d="M453.5 293.3L455.1 294.8L456.7 293.3" fill="none" stroke="#999" stroke-width="0.7"/>
<path d="M490.5 293.3L492.1 294.8L493.7 293.3" fill="none" stroke="#999" stroke-width="0.7"/>
<path d="M499.5 291.5H506.5M501 293.5H505V297.5H501Z" fill="none" stroke="#bbb" stroke-width="0.8"/>
<rect x="511.5" y="291.2" width="7" height="6.6" fill="none" stroke="#c8c8c8" stroke-width="0.8"/><path d="M514 293V295.8H516.5" fill="none" stroke="#c8c8c8" stroke-width="0.8"/>
<path d="M522.5 293V297H529.5V293M524.5 295L526 292.5L527.5 295" fill="none" stroke="#bdbdbd" stroke-width="0.8"/>
<circle cx="536.5" cy="292" r="1.3" fill="#cfcfcf"/><circle cx="534" cy="296.5" r="1.3" fill="#cfcfcf"/><circle cx="539" cy="296.5" r="1.3" fill="#cfcfcf"/><path d="M536.5 292L534 296.5M536.5 292L539 296.5" stroke="#cfcfcf" stroke-width="0.6"/>
<path d="M550 291.5L552.8 293V296L550 297.5L547.2 296V293Z" fill="none" stroke="#cfcfcf" stroke-width="0.8"/><circle cx="550" cy="294.5" r="0.8" fill="#cfcfcf"/>
</svg>
<div class="t" style="left:210px;top:292px;color:#a5a5a5;font-size:5.8px">50%</div>
<div class="t" style="left:270px;top:292.5px;color:#5a5a5a;font-size:5.6px">0:00:01:16</div>
<div class="t" style="left:340px;top:292.5px;color:#a0a0a0;font-size:5.8px">Quarter</div>
<div class="t" style="left:408px;top:292.5px;color:#a8a8a8;font-size:5.6px">Active Camera</div>
<div class="t" style="left:465px;top:292.5px;color:#a0a0a0;font-size:5.6px">1 View</div>
<div class="t" style="left:557px;top:292.5px;color:#36609e;font-size:5.6px">+0.0</div>
<!-- ===== EFFECTS PANEL ===== -->
<div class="a" style="left:686px;top:37px;width:114px;height:266px;background:#141414"></div>
<div class="a" style="left:687px;top:37px;width:107px;height:156px;background:#222"></div>
<div class="a" style="left:794px;top:37px;width:6px;height:263px;background:#1c1c1c"></div><div class="a" style="left:795px;top:122px;width:5px;height:66px;background:#2e2e2e"></div>
<svg class="ic" style="left:690.5px;top:37.6px" width="3" height="5" viewBox="0 0 3 5"><path d="M0.5 0.5L2.5 2.5L0.5 4.5" fill="none" stroke="#707070" stroke-width="0.6"/></svg>
<div class="t" style="left:696px;top:36.8px;color:#a8a8a8;font-size:5.8px;transform:scaleY(1.15);transform-origin:0 0">Channel</div>
<svg class="ic" style="left:690.5px;top:46.4px" width="3" height="5" viewBox="0 0 3 5"><path d="M0.5 0.5L2.5 2.5L0.5 4.5" fill="none" stroke="#707070" stroke-width="0.6"/></svg>
<div class="t" style="left:696px;top:45.6px;color:#a8a8a8;font-size:5.8px;transform:scaleY(1.15);transform-origin:0 0">CINEMA 4D</div>
<svg class="ic" style="left:690.5px;top:55.2px" width="3" height="5" viewBox="0 0 3 5"><path d="M0.5 0.5L2.5 2.5L0.5 4.5" fill="none" stroke="#707070" stroke-width="0.6"/></svg>
<div class="t" style="left:696px;top:54.4px;color:#a8a8a8;font-size:5.8px;transform:scaleY(1.15);transform-origin:0 0">Color Correction</div>
<svg class="ic" style="left:690.5px;top:64.0px" width="3" height="5" viewBox="0 0 3 5"><path d="M0.5 0.5L2.5 2.5L0.5 4.5" fill="none" stroke="#707070" stroke-width="0.6"/></svg>
<div class="t" style="left:696px;top:63.2px;color:#a8a8a8;font-size:5.8px;transform:scaleY(1.15);transform-origin:0 0">Distort</div>
<svg class="ic" style="left:690.5px;top:72.8px" width="3" height="5" viewBox="0 0 3 5"><path d="M0.5 0.5L2.5 2.5L0.5 4.5" fill="none" stroke="#707070" stroke-width="0.6"/></svg>
<div class="t" style="left:696px;top:72.0px;color:#a8a8a8;font-size:5.8px;transform:scaleY(1.15);transform-origin:0 0">Expression Controls</div>
<svg class="ic" style="left:690.5px;top:81.7px" width="3" height="5" viewBox="0 0 3 5"><path d="M0.5 0.5L2.5 2.5L0.5 4.5" fill="none" stroke="#707070" stroke-width="0.6"/></svg>
<div class="t" style="left:696px;top:80.9px;color:#a8a8a8;font-size:5.8px;transform:scaleY(1.15);transform-origin:0 0">Generate</div>
<svg class="ic" style="left:690.5px;top:90.5px" width="3" height="5" viewBox="0 0 3 5"><path d="M0.5 0.5L2.5 2.5L0.5 4.5" fill="none" stroke="#707070" stroke-width="0.6"/></svg>
<div class="t" style="left:696px;top:89.7px;color:#a8a8a8;font-size:5.8px;transform:scaleY(1.15);transform-origin:0 0">Immersive Video</div>
<svg class="ic" style="left:690.5px;top:99.3px" width="3" height="5" viewBox="0 0 3 5"><path d="M0.5 0.5L2.5 2.5L0.5 4.5" fill="none" stroke="#707070" stroke-width="0.6"/></svg>
<div class="t" style="left:696px;top:98.5px;color:#a8a8a8;font-size:5.8px;transform:scaleY(1.15);transform-origin:0 0">Keying</div>
<svg class="ic" style="left:690.5px;top:108.1px" width="3" height="5" viewBox="0 0 3 5"><path d="M0.5 0.5L2.5 2.5L0.5 4.5" fill="none" stroke="#707070" stroke-width="0.6"/></svg>
<div class="t" style="left:696px;top:107.3px;color:#a8a8a8;font-size:5.8px;transform:scaleY(1.15);transform-origin:0 0">Matte</div>
<svg class="ic" style="left:690.5px;top:116.9px" width="3" height="5" viewBox="0 0 3 5"><path d="M0.5 0.5L2.5 2.5L0.5 4.5" fill="none" stroke="#707070" stroke-width="0.6"/></svg>
<div class="t" style="left:696px;top:116.1px;color:#a8a8a8;font-size:5.8px;transform:scaleY(1.15);transform-origin:0 0">Noise &amp; Grain</div>
<svg class="ic" style="left:690.5px;top:125.7px" width="3" height="5" viewBox="0 0 3 5"><path d="M0.5 0.5L2.5 2.5L0.5 4.5" fill="none" stroke="#707070" stroke-width="0.6"/></svg>
<div class="t" style="left:696px;top:124.9px;color:#a8a8a8;font-size:5.8px;transform:scaleY(1.15);transform-origin:0 0">Obsolete</div>
<svg class="ic" style="left:690.5px;top:134.5px" width="3" height="5" viewBox="0 0 3 5"><path d="M0.5 0.5L2.5 2.5L0.5 4.5" fill="none" stroke="#707070" stroke-width="0.6"/></svg>
<div class="t" style="left:696px;top:133.7px;color:#a8a8a8;font-size:5.8px;transform:scaleY(1.15);transform-origin:0 0">Perspective</div>
<svg class="ic" style="left:690.5px;top:143.3px" width="3" height="5" viewBox="0 0 3 5"><path d="M0.5 0.5L2.5 2.5L0.5 4.5" fill="none" stroke="#707070" stroke-width="0.6"/></svg>
<div class="t" style="left:696px;top:142.5px;color:#a8a8a8;font-size:5.8px;transform:scaleY(1.15);transform-origin:0 0">Simulation</div>
<svg class="ic" style="left:690.5px;top:152.1px" width="3" height="5" viewBox="0 0 3 5"><path d="M0.5 0.5L2.5 2.5L0.5 4.5" fill="none" stroke="#707070" stroke-width="0.6"/></svg>
<div class="t" style="left:696px;top:151.3px;color:#a8a8a8;font-size:5.8px;transform:scaleY(1.15);transform-origin:0 0">Stylize</div>
<svg class="ic" style="left:690.5px;top:160.9px" width="3" height="5" viewBox="0 0 3 5"><path d="M0.5 0.5L2.5 2.5L0.5 4.5" fill="none" stroke="#707070" stroke-width="0.6"/></svg>
<div class="t" style="left:696px;top:160.1px;color:#a8a8a8;font-size:5.8px;transform:scaleY(1.15);transform-origin:0 0">Text</div>
<svg class="ic" style="left:690.5px;top:169.8px" width="3" height="5" viewBox="0 0 3 5"><path d="M0.5 0.5L2.5 2.5L0.5 4.5" fill="none" stroke="#707070" stroke-width="0.6"/></svg>
<div class="t" style="left:696px;top:169.0px;color:#a8a8a8;font-size:5.8px;transform:scaleY(1.15);transform-origin:0 0">Time</div>
<svg class="ic" style="left:690.5px;top:178.6px" width="3" height="5" viewBox="0 0 3 5"><path d="M0.5 0.5L2.5 2.5L0.5 4.5" fill="none" stroke="#707070" stroke-width="0.6"/></svg>
<div class="t" style="left:696px;top:177.8px;color:#a8a8a8;font-size:5.8px;transform:scaleY(1.15);transform-origin:0 0">Transition</div>
<svg class="ic" style="left:690.5px;top:187.4px" width="3" height="5" viewBox="0 0 3 5"><path d="M0.5 0.5L2.5 2.5L0.5 4.5" fill="none" stroke="#707070" stroke-width="0.6"/></svg>
<div class="t" style="left:696px;top:186.6px;color:#a8a8a8;font-size:5.8px;transform:scaleY(1.15);transform-origin:0 0">Utility</div>
<div class="a" style="left:687px;top:193px;width:107px;height:9px;background:#202020;border-top:1px solid #141414;border-bottom:1px solid #141414"></div>
<svg class="ic" style="left:784.5px;top:194.5px" width="6" height="6" viewBox="0 0 6 6"><path d="M0.5 0.5H5.5V5.5H2L0.5 4Z" fill="#d8d8d8"/><path d="M0.5 3.8H2.2V5.5" fill="none" stroke="#555" stroke-width="0.5"/></svg>
<div class="a" style="left:687px;top:203px;width:107px;height:17.0px;background:#222"></div>
<div class="t" style="left:694px;top:210.4px;color:#9a9a9a;font-size:5.8px;transform:scaleY(1.12);transform-origin:0 0">Align</div>
<div class="a" style="left:687px;top:220.5px;width:107px;height:16.0px;background:#222"></div>
<div class="t" style="left:694px;top:227.4px;color:#9a9a9a;font-size:5.8px;transform:scaleY(1.12);transform-origin:0 0">Libraries</div>
<div class="a" style="left:687px;top:237px;width:107px;height:15.0px;background:#222"></div>
<div class="t" style="left:694px;top:243.4px;color:#9a9a9a;font-size:5.8px;transform:scaleY(1.12);transform-origin:0 0">Character</div>
<div class="a" style="left:687px;top:252.5px;width:107px;height:15.5px;background:#222"></div>
<div class="t" style="left:694px;top:259.1px;color:#9a9a9a;font-size:5.8px;transform:scaleY(1.12);transform-origin:0 0">Paragraph</div>
<div class="a" style="left:687px;top:268.5px;width:107px;height:15.5px;background:#222"></div>
<div class="t" style="left:694px;top:275.1px;color:#9a9a9a;font-size:5.8px;transform:scaleY(1.12);transform-origin:0 0">Tracker</div>
<div class="a" style="left:687px;top:284.5px;width:107px;height:15.5px;background:#222"></div>
<div class="t" style="left:694px;top:291.1px;color:#9a9a9a;font-size:5.8px;transform:scaleY(1.12);transform-origin:0 0">Content-Aware Fill</div>
<div class="a" style="left:687px;top:37px;width:107px;height:1.4px;background:#1e1e1e"></div>
<!-- ===== RENDER QUEUE ===== -->
<div class="a" style="left:0;top:300px;width:800px;height:140px;background:#121212"></div>
<div class="a" style="left:2px;top:302.5px;width:798px;height:137.5px;background:#222;border-top:1px solid #243759;border-left:1px solid #243759"></div>
<div class="t" style="left:7.5px;top:308.3px;color:#888;font-size:5px">&#215;</div>
<div class="t" style="left:16px;top:307.8px;color:#b0b0b0;font-size:5.9px">Render Queue</div>
<svg class="ic" style="left:58.5px;top:308.5px" width="4" height="5" viewBox="0 0 4 5"><path d="M0 0.8H4M0 2.5H4M0 4.2H4" stroke="#8a8a8a" stroke-width="0.9"/></svg>
<div class="a" style="left:8px;top:315.5px;width:55px;height:1.2px;background:#a5a5a5"></div>
<div class="a" style="left:81px;top:307.5px;width:6px;height:6px;background:#d0c4a0"></div>
<div class="t" style="left:93px;top:307.8px;color:#8a8a8a;font-size:5.9px">Winter-1</div>
<div class="a" style="left:3px;top:318px;width:797px;height:0.7px;background:#1c1c1c"></div>
<!-- current render bar -->
<div class="a" style="left:3px;top:334px;width:797px;height:15px;background:#1c1c1c"></div>
<svg class="ic" style="left:8.5px;top:339px" width="3" height="5" viewBox="0 0 3 5"><path d="M0.5 0.5L2.5 2.5L0.5 4.5" fill="none" stroke="#888" stroke-width="0.6"/></svg>
<div class="t" style="left:16px;top:338.5px;color:#9a9a9a;font-size:5.7px">Current Render</div>
<div class="t" style="left:313.5px;top:338.5px;color:#bdbdbd;font-size:5.7px">Elapsed:</div>
<div class="t" style="left:510px;top:338.5px;color:#bdbdbd;font-size:5.7px">Est. Remain:</div>
<div class="a" style="left:596px;top:334.3px;width:48.5px;height:9.7px;border-radius:5px;border:0.9px solid #9c9c9c"></div>
<div class="t" style="left:601px;top:336.8px;color:#b0b0b0;font-size:5.6px">Queue in AME</div>
<div class="a" style="left:648.5px;top:334.5px;width:45px;height:9.5px;border-radius:5px;background:#262626"></div>
<div class="t" style="left:665px;top:336.8px;color:#555;font-size:5.6px">Stop</div>
<div class="a" style="left:698px;top:334.5px;width:43.5px;height:9.5px;border-radius:5px;background:#262626"></div>
<div class="t" style="left:713px;top:336.8px;color:#555;font-size:5.6px">Pause</div>
<div class="a" style="left:748px;top:334px;width:48px;height:10px;border-radius:5px;background:#dedede"></div>
<div class="t" style="left:762px;top:336.8px;color:#555;font-size:5.6px">Render</div>
<svg class="ic" style="left:773.5px;top:337.5px" width="5" height="8" viewBox="0 0 5 8"><path d="M0.5 0.5V6.5L1.8 5.3L3 7.5L3.8 7.1L2.7 5H4.5Z" fill="#fff" stroke="#222" stroke-width="0.5"/></svg>
<div class="a" style="left:3px;top:348.5px;width:797px;height:1px;background:#151515"></div>
<!-- header -->
<div class="a" style="left:3px;top:349.5px;width:797px;height:8.5px;background:#2d2d2d"></div>
<div class="a" style="left:3px;top:358px;width:797px;height:0.7px;background:#1a1a1a"></div>
<div class="t" style="left:13px;top:352.4px;color:#6f6f6f;font-size:4.6px">Render</div>
<div class="a" style="left:31.5px;top:350.5px;width:0.6px;height:6.5px;background:#3a3a3a"></div>
<svg class="ic" style="left:35.5px;top:350.5px" width="7" height="7" viewBox="0 0 7 7"><path d="M0.5 0.5H3.5L6.5 3.5L3.5 6.5L0.5 3.5Z" fill="#dadada"/><circle cx="2" cy="2" r="0.7" fill="#2d2d2d"/></svg>
<div class="t" style="left:47px;top:352.9px;color:#777;font-size:4.5px">#</div>
<div class="a" style="left:57px;top:350.5px;width:0.6px;height:6.5px;background:#3a3a3a"></div>
<div class="t" style="left:60px;top:352.4px;color:#7a7a7a;font-size:5px">Comp Name</div>
<div class="a" style="left:116px;top:350.5px;width:0.6px;height:6.5px;background:#3a3a3a"></div>
<div class="t" style="left:120px;top:352.4px;color:#7a7a7a;font-size:5px">Status</div>
<div class="a" style="left:169px;top:350.5px;width:0.6px;height:6.5px;background:#3a3a3a"></div>
<div class="t" style="left:172px;top:352.4px;color:#7a7a7a;font-size:5px">Started</div>
<div class="t" style="left:239.5px;top:352.4px;color:#7a7a7a;font-size:5px">Render Time</div>
<div class="a" style="left:305px;top:350.5px;width:0.6px;height:6.5px;background:#3a3a3a"></div>
<div class="t" style="left:307.5px;top:352.4px;color:#7a7a7a;font-size:5px">Comment</div>
<div class="a" style="left:352.5px;top:350.5px;width:0.6px;height:6.5px;background:#333"></div>
<!-- row -->
<svg class="ic" style="left:5px;top:362.0px" width="5" height="4" viewBox="0 0 5 4"><path d="M0.5 0.8L2.5 3L4.5 0.8" fill="none" stroke="#666" stroke-width="0.6"/></svg>
<div class="a" style="left:19px;top:360.5px;width:6.5px;height:6.5px;background:#cfcfcf"></div>
<svg class="ic" style="left:19px;top:360.5px" width="7" height="7" viewBox="0 0 7 7"><path d="M1.5 3.5L3 5L5.5 2" fill="none" stroke="#333" stroke-width="0.9"/></svg>
<div class="a" style="left:36px;top:361.0px;width:5.5px;height:5.5px;background:#c9b995"></div>
<div class="t" style="left:46.5px;top:361.0px;color:#8a8a8a;font-size:5.8px">1</div>
<div class="t" style="left:60px;top:361.0px;color:#a8a8a8;font-size:5.8px">Winter-1</div>
<div class="t" style="left:118px;top:361.0px;color:#a0a0a0;font-size:5.8px">Queued</div>
<div class="t" style="left:171px;top:361.0px;color:#777;font-size:5.8px">-</div>
<!-- render settings -->
<svg class="ic" style="left:13px;top:369.3px" width="3" height="5" viewBox="0 0 3 5"><path d="M0.5 0.5L2.5 2.5L0.5 4.5" fill="none" stroke="#666" stroke-width="0.6"/></svg>
<div class="t" style="left:22px;top:368.5px;color:#9a9a9a;font-size:6px">Render Settings:</div>
<svg class="ic" style="left:70px;top:370px" width="5" height="4" viewBox="0 0 5 4"><path d="M0.5 0.8L2.5 3L4.5 0.8" fill="none" stroke="#777" stroke-width="0.6"/></svg>
<div class="t" style="left:78px;top:368.9px;color:#3f74c2;font-size:5.3px">Best Settings</div>
<div class="t" style="left:220px;top:368.5px;color:#9a9a9a;font-size:6px">Log:</div>
<div class="a" style="left:234px;top:367.5px;width:70px;height:8px;background:#1f1f1f"></div>
<div class="t" style="left:237px;top:368.6px;color:#b8b8b8;font-size:6.3px">Errors Only</div>
<svg class="ic" style="left:298px;top:370px" width="5" height="4" viewBox="0 0 5 4"><path d="M0.5 0.8L2.5 3L4.5 0.8" fill="none" stroke="#777" stroke-width="0.6"/></svg>
<!-- output module -->
<svg class="ic" style="left:13px;top:377.5px" width="3" height="5" viewBox="0 0 3 5"><path d="M0.5 0.5L2.5 2.5L0.5 4.5" fill="none" stroke="#666" stroke-width="0.6"/></svg>
<div class="t" style="left:23px;top:376.7px;color:#9a9a9a;font-size:6px">Output Module:</div>
<svg class="ic" style="left:70px;top:378px" width="5" height="4" viewBox="0 0 5 4"><path d="M0.5 0.8L2.5 3L4.5 0.8" fill="none" stroke="#777" stroke-width="0.6"/></svg>
<div class="t" style="left:78px;top:377.3px;color:#3f74c2;font-size:5.05px">Custom: JPEG Sequence</div>
<svg class="ic" style="left:185px;top:376.5px" width="7" height="7" viewBox="0 0 7 7"><path d="M3.5 0.5V6.5M0.5 3.5H6.5" stroke="#e0e0e0" stroke-width="1.4"/></svg>
<div class="a" style="left:193px;top:379.5px;width:7px;height:0.7px;background:#444"></div>
<div class="t" style="left:203px;top:376.7px;color:#9a9a9a;font-size:6px">Output To:</div>
<svg class="ic" style="left:237px;top:378px" width="5" height="4" viewBox="0 0 5 4"><path d="M0.5 0.8L2.5 3L4.5 0.8" fill="none" stroke="#777" stroke-width="0.6"/></svg>
<div class="a" style="left:244px;top:376px;width:77px;height:8px;background:#1b2a40"></div>
<div class="t" style="left:245px;top:377px;color:#3f74c2;font-size:5.55px">Winter-1\Winter-1_[#####].jpg</div>
<!-- bottom -->
<div class="a" style="left:0;top:440px;width:791px;height:9px;background:#020202"></div>
<div class="a" style="left:791px;top:437px;width:9px;height:12px;background:#2a2a2a"></div>
<div class="a" style="left:26px;top:448px;width:179px;height:1px;background:#9a9a9a"></div><div class="a" style="left:410px;top:448px;width:30px;height:1px;background:#777"></div>
</body></html>
